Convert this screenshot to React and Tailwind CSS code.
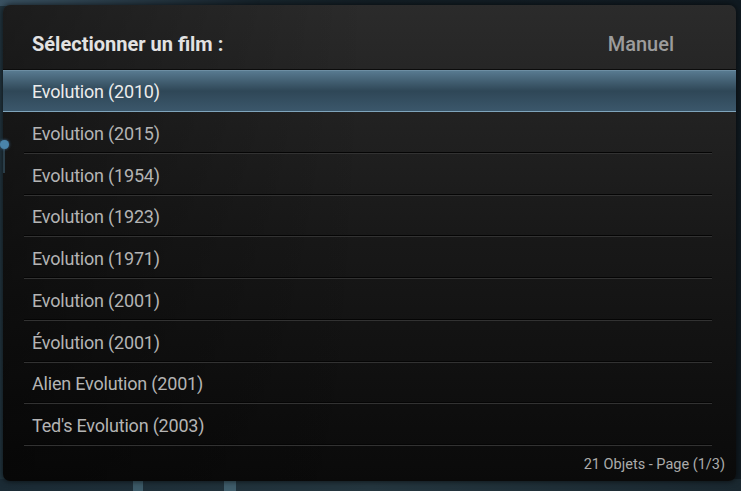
const movies = [
  'Evolution (2010)',
  'Evolution (2015)',
  'Evolution (1954)',
  'Evolution (1923)',
  'Evolution (1971)',
  'Evolution (2001)',
  'Évolution (2001)',
  'Alien Evolution (2001)',
  "Ted's Evolution (2003)",
];

export default function App() {
  const selected = 0;

  return (
    <div className="relative w-[741px] h-[491px] overflow-hidden bg-gradient-to-r from-[#22353f] via-[#131e25] to-[#101a21] font-['Roboto',sans-serif]">
      {/* blurred backdrop bits */}
      <div className="absolute left-0 top-0 w-[260px] h-[6px] bg-gradient-to-r from-[#3a5262] to-[#16222a]" />
      <div className="absolute left-0 bottom-0 w-full h-[12px] bg-gradient-to-r from-[#1b2b35] via-[#24363f] to-[#1a2830]" />
      <div className="absolute left-[133px] bottom-0 w-[10px] h-[12px] bg-[#3c5a68]" />
      <div className="absolute left-[224px] bottom-0 w-[12px] h-[12px] bg-[#3f5d6b]" />

      <div className="relative ml-[3px] mt-[5px] w-[733px] h-[476px] rounded-[7px] overflow-hidden flex flex-col bg-gradient-to-b from-[#2b2b2b] via-[#181818] to-[#0a0a0a] shadow-[0_0_6px_rgba(0,0,0,0.7)]">
        <div className="absolute inset-0 bg-gradient-to-r from-[rgba(0,0,0,0.35)] via-transparent to-transparent pointer-events-none" />

        <div className="relative h-[65px] shrink-0 flex items-center justify-between pt-[13px] pl-[29px] pr-[62px] border-b border-[#0c0c0c]">
          <span className="text-[20px] font-bold text-[#e2e2e2] leading-6">Sélectionner un film :</span>
          <span className="text-[20px] font-medium text-[#9c9c9c] leading-6">Manuel</span>
        </div>

        <div className="relative flex flex-col">
          {movies.map((m, i) =>
            i === selected ? (
              <div
                key={m}
                className="h-[42px] flex items-center pl-[29px] pt-[2px] bg-gradient-to-b from-[#587a90] via-[#2f4757] to-[#3b576b] border-t border-[#6d8ea3] border-b border-b-[#7fa4bb]"
              >
                <span className="text-[18px] tracking-[-0.2px] text-[#ececec] leading-6">{m}</span>
              </div>
            ) : (
              <div key={m} className="relative h-[41.75px] flex items-center pl-[29px] pt-[2px]">
                <span className="text-[18px] tracking-[-0.2px] text-[#b4b4b4] leading-6">{m}</span>
                <div className="absolute left-[21px] right-[24px] bottom-0 h-[2px] border-t border-[#050505] border-b border-b-[#323232]" />
              </div>
            )
          )}
        </div>

        <div className="relative flex-1 flex items-center justify-end pt-[3px] pr-[11px]">
          <span className="text-[14.5px] text-[#ababab] leading-5">21 Objets - Page (1/3)</span>
        </div>
      </div>

      {/* scroll knob on the left edge */}
      <div className="absolute left-[3px] top-[149px] w-[2px] h-[24px] bg-[#2a3d48]" />
      <div className="absolute left-0 top-[140px] w-[9px] h-[9px] rounded-full bg-[#4a84aa] shadow-[0_0_3px_rgba(80,140,190,0.8)]" />
    </div>
  );
}
